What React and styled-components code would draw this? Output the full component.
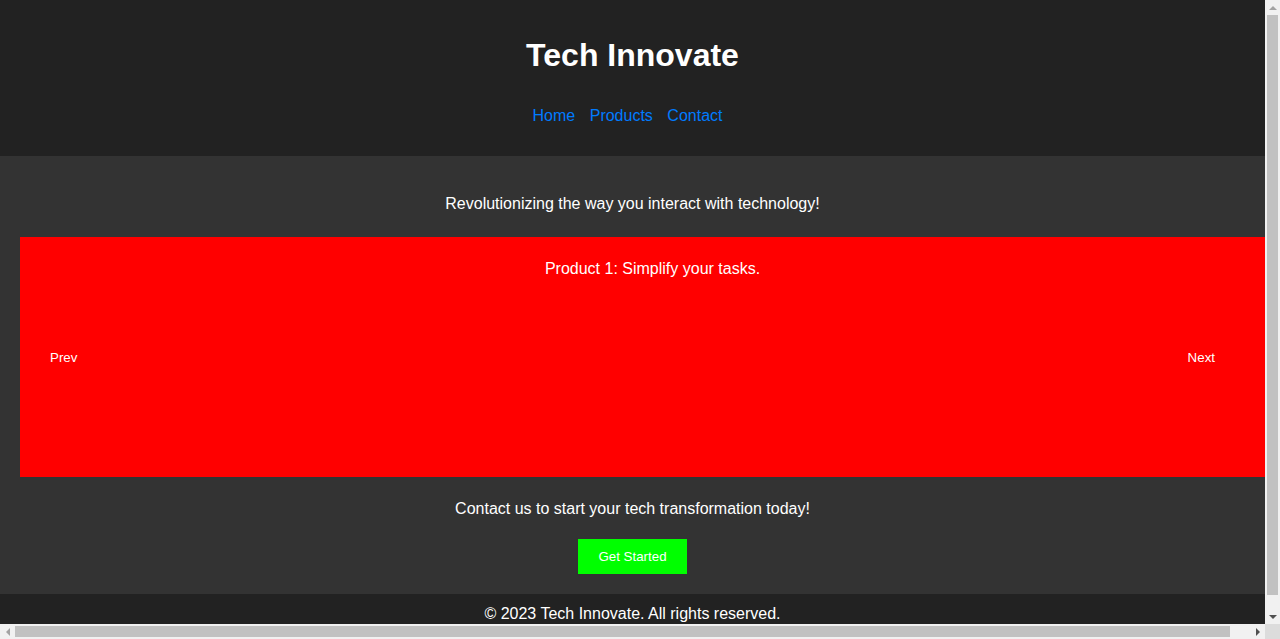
import React from 'react';
import styled, { createGlobalStyle } from 'styled-components';

const GlobalStyle = createGlobalStyle`
  body {
    margin: 0;
    font-family: "Liberation Sans", Arial, sans-serif;
    line-height: 1.5;
    color: #fff;
    background-color: #333;
  }
`;

const Page = styled.div`
  width: calc(100vw - 15px);
`;

const Header = styled.header`
  background-color: #222;
  padding: 10px 0 28px;
  text-align: center;

  h1 {
    font-size: 32px;
    margin: 21.44px 0 0;
  }
`;

const Nav = styled.nav`
  margin-top: 24.5px;
  padding-right: 10px;
  display: flex;
  justify-content: center;
  gap: 14.5px;

  a {
    color: #007bff;
    text-decoration: none;
    font-size: 16px;
  }
`;

const Main = styled.main`
  background-color: #333;
  padding: 20px;
  text-align: center;
`;

const Text = styled.p`
  margin: ${props => props.$margin || '16px 0'};
  font-size: 16px;
`;

const Carousel = styled.div`
  position: relative;
  margin: 21px 0 20px;
`;

const Slide = styled.div`
  width: 100%;
  height: 200px;
  padding: 20px;
  background-color: #ff0000;
  text-align: center;

  p {
    margin: 0;
  }
`;

const ArrowButton = styled.button`
  position: absolute;
  top: 50%;
  transform: translateY(-50%);
  ${props => (props.$side === 'left' ? 'left: 10px;' : 'right: 10px;')}
  padding: 10px 20px;
  background: transparent;
  border: none;
  color: #fff;
  font-family: "Liberation Sans", Arial, sans-serif;
  font-size: 13.33px;
  cursor: pointer;
`;

const CtaButton = styled.button`
  display: block;
  margin: 0 auto;
  padding: 10px 20px;
  background-color: #00ff00;
  border: none;
  color: #fff;
  font-family: "Liberation Sans", Arial, sans-serif;
  font-size: 13.33px;
  cursor: pointer;
`;

const Footer = styled.footer`
  background-color: #222;
  padding: 8px 0 13px;
  text-align: center;

  p {
    margin: 0;
  }
`;

// fake browser scrollbars (the headless window hides the real ones)
const ScrollTrack = styled.div`
  position: fixed;
  z-index: 10;
  background-color: #f1f1f1;
  display: flex;
  flex-direction: ${props => (props.$vertical ? 'column' : 'row')};
  ${props => props.$vertical
    ? 'top: 0; right: 0; width: 15px; height: calc(100vh - 15px);'
    : 'left: 0; bottom: 0; height: 15px; width: calc(100vw - 15px);'}
`;

const ScrollArrow = styled.div`
  flex: 0 0 15px;
  width: 15px;
  height: 15px;
  display: flex;
  align-items: center;
  justify-content: center;
  ${props => (props.$end ? 'margin-left: auto; margin-top: auto;' : '')}

  &::before {
    content: '';
    width: 0;
    height: 0;
    ${props => {
      const c = props.$active ? '#505050' : '#a3a3a3';
      switch (props.$dir) {
        case 'up':
          return `border-left: 4px solid transparent; border-right: 4px solid transparent; border-bottom: 4px solid ${c};`;
        case 'down':
          return `border-left: 4px solid transparent; border-right: 4px solid transparent; border-top: 4px solid ${c};`;
        case 'left':
          return `border-top: 4px solid transparent; border-bottom: 4px solid transparent; border-right: 4px solid ${c};`;
        default:
          return `border-top: 4px solid transparent; border-bottom: 4px solid transparent; border-left: 4px solid ${c};`;
      }
    }}
  }
`;

const ScrollThumb = styled.div`
  background-color: #c1c1c1;
  ${props => (props.$vertical
    ? 'width: 11px; margin: 0 2px; height: 580px;'
    : 'height: 11px; margin: 2px 0; width: 1215px;')}
`;

const ScrollCorner = styled.div`
  position: fixed;
  z-index: 10;
  right: 0;
  bottom: 0;
  width: 15px;
  height: 15px;
  background-color: #dcdcdc;
`;

function App() {
    return (
        <>
            <GlobalStyle />
            <Page>
                <Header>
                    <h1>Tech Innovate</h1>
                    <Nav>
                        <a href="#home">Home</a>
                        <a href="#products">Products</a>
                        <a href="#contact">Contact</a>
                    </Nav>
                </Header>
                <Main>
                    <Text>Revolutionizing the way you interact with technology!</Text>
                    <Carousel>
                        <Slide>
                            <p>Product 1: Simplify your tasks.</p>
                        </Slide>
                        <ArrowButton $side="left">Prev</ArrowButton>
                        <ArrowButton $side="right">Next</ArrowButton>
                    </Carousel>
                    <Text $margin="20px 0 18px">Contact us to start your tech transformation today!</Text>
                    <CtaButton>Get Started</CtaButton>
                </Main>
                <Footer>
                    <p>© 2023 Tech Innovate. All rights reserved.</p>
                </Footer>
            </Page>
            <ScrollTrack $vertical>
                <ScrollArrow $dir="up" />
                <ScrollThumb $vertical />
                <ScrollArrow $dir="down" $active $end />
            </ScrollTrack>
            <ScrollTrack>
                <ScrollArrow $dir="left" />
                <ScrollThumb />
                <ScrollArrow $dir="right" $active $end />
            </ScrollTrack>
            <ScrollCorner />
        </>
    );
}

export default App;
